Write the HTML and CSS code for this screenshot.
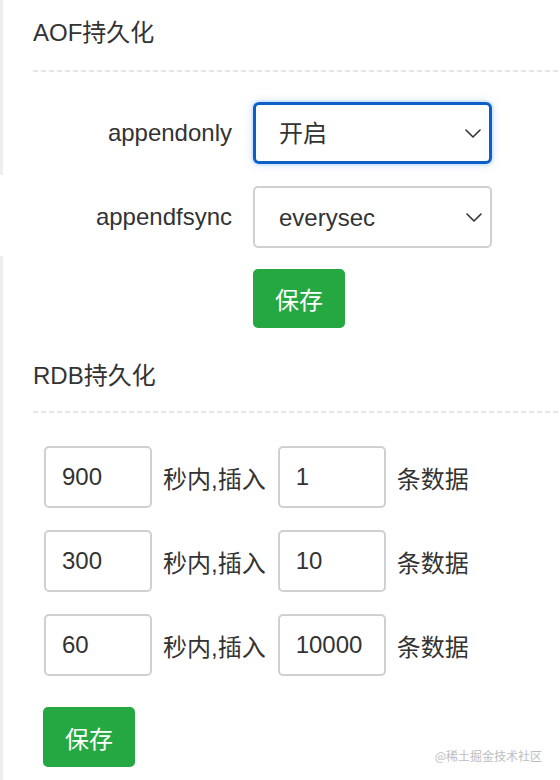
FILE: index.html
```html
<!DOCTYPE html>
<html lang="zh-CN">
<head>
<meta charset="utf-8">
<title>持久化配置</title>
<link rel="stylesheet" href="styles.css">
</head>
<body>
<div class="page">
  <section class="block block-a">
    <h2 class="title">AOF持久化</h2>
    <div class="divider"></div>
    <div class="field">
      <label class="label" for="appendonly">appendonly</label>
      <select id="appendonly" class="select focused">
        <option>开启</option>
        <option>关闭</option>
      </select>
    </div>
  </section>
  <div class="block block-b">
    <div class="field">
      <label class="label" for="appendfsync">appendfsync</label>
      <select id="appendfsync" class="select">
        <option>everysec</option>
        <option>always</option>
        <option>no</option>
      </select>
    </div>
  </div>
  <section class="block block-c">
    <div class="aof-actions">
      <button class="btn">保存</button>
    </div>
    <h2 class="title rdb-title">RDB持久化</h2>
    <div class="divider rdb-divider"></div>
    <div class="rdb-form">
      <div class="rdb-row">
        <input class="input" value="900">
        <span class="text">秒内,插入</span>
        <input class="input" value="1">
        <span class="text">条数据</span>
      </div>
      <div class="rdb-row">
        <input class="input" value="300">
        <span class="text">秒内,插入</span>
        <input class="input" value="10">
        <span class="text">条数据</span>
      </div>
      <div class="rdb-row">
        <input class="input" value="60">
        <span class="text">秒内,插入</span>
        <input class="input" value="10000">
        <span class="text">条数据</span>
      </div>
      <div class="rdb-actions">
        <button class="btn">保存</button>
      </div>
    </div>
  </section>
  <div class="watermark">@稀土掘金技术社区</div>
</div>
</body>
</html>
```

FILE: styles.css
```css
* { box-sizing: border-box; }

html, body {
  margin: 0;
  padding: 0;
  background: #fff;
}

body {
  font-family: "Liberation Sans", "Noto Sans CJK SC", sans-serif;
  color: #333;
  font-size: 24px;
  width: 560px;
  height: 780px;
  overflow: hidden;
}

.page {
  position: relative;
  width: 560px;
  height: 780px;
}

.block {
  background: #fff;
}

.block-a {
  border-left: 3px solid #eeeeee;
  padding-top: 15px;
  padding-bottom: 11px;
}

.block-b {
  padding-left: 3px;
  padding-top: 11px;
  padding-bottom: 8px;
}

.block-c {
  border-left: 3px solid #eeeeee;
  padding-top: 13px;
  height: 524px;
}

.title {
  margin: 0 0 0 30px;
  font-size: 24px;
  line-height: 36px;
  font-weight: normal;
  color: #333;
}

.divider {
  margin: 19px 0 0 30px;
  height: 2px;
  background-image: linear-gradient(to right, #e6e6e6 5px, transparent 5px);
  background-size: 8px 2px;
  background-repeat: repeat-x;
}

.block-a .field {
  margin-top: 30px;
}

.field {
  display: grid;
  grid-template-columns: 229px 239px;
  column-gap: 21px;
  align-items: center;
}

.label {
  text-align: right;
  font-size: 24px;
  color: #333;
}

.select {
  appearance: none;
  -webkit-appearance: none;
  height: 62px;
  width: 239px;
  font-family: "Liberation Sans", "Noto Sans CJK SC", sans-serif;
  font-size: 24px;
  color: #333;
  background-color: #fff;
  background-image: url("data:image/svg+xml,%3Csvg xmlns='http://www.w3.org/2000/svg' width='16' height='9' viewBox='0 0 16 9'%3E%3Cpath d='M1 1l7 7 7-7' fill='none' stroke='%23333' stroke-width='1.6' stroke-linecap='round' stroke-linejoin='round'/%3E%3C/svg%3E");
  background-repeat: no-repeat;
  background-position: right 8px center;
  background-size: 16px 9px;
  border: 2px solid #d0d0d0;
  border-radius: 5px;
  padding: 0 36px 0 24px;
  outline: none;
}

.select.focused {
  border: 3px solid #0b5fc6;
  border-radius: 6px;
  padding-left: 23px;
  box-shadow: 0 0 0 2px rgba(13, 110, 253, 0.08), 0 0 10px rgba(13, 110, 253, 0.22);
}

.aof-actions {
  padding-left: 250px;
}

.btn {
  font-family: "Liberation Sans", "Noto Sans CJK SC", sans-serif;
  font-size: 24px;
  color: #fff;
  background: #25a842;
  border: none;
  border-radius: 5px;
  width: 92px;
  height: 59px;
  padding: 0;
  cursor: pointer;
}

.rdb-title {
  margin-top: 30px;
}

.rdb-divider {
  margin-top: 17px;
}

.rdb-form {
  padding-left: 41px;
  padding-top: 33px;
  display: flex;
  flex-direction: column;
  gap: 22px;
}

.rdb-row {
  display: flex;
  align-items: center;
  gap: 11px;
}

.input {
  width: 108px;
  height: 62px;
  border: 2px solid #d0d0d0;
  border-radius: 5px;
  padding: 0 0 0 16px;
  font-family: "Liberation Sans", "Noto Sans CJK SC", sans-serif;
  font-size: 24px;
  color: #333;
  outline: none;
}

.text {
  font-size: 24px;
  color: #333;
  margin-right: 1px;
}

.rdb-actions {
  margin-top: 9px;
  margin-left: -1px;
}

.rdb-actions .btn {
  height: 60px;
}

.watermark {
  position: absolute;
  right: 18px;
  top: 747px;
  font-size: 12px;
  color: #bdbdbd;
  font-family: "Noto Sans CJK SC", sans-serif;
}
```
